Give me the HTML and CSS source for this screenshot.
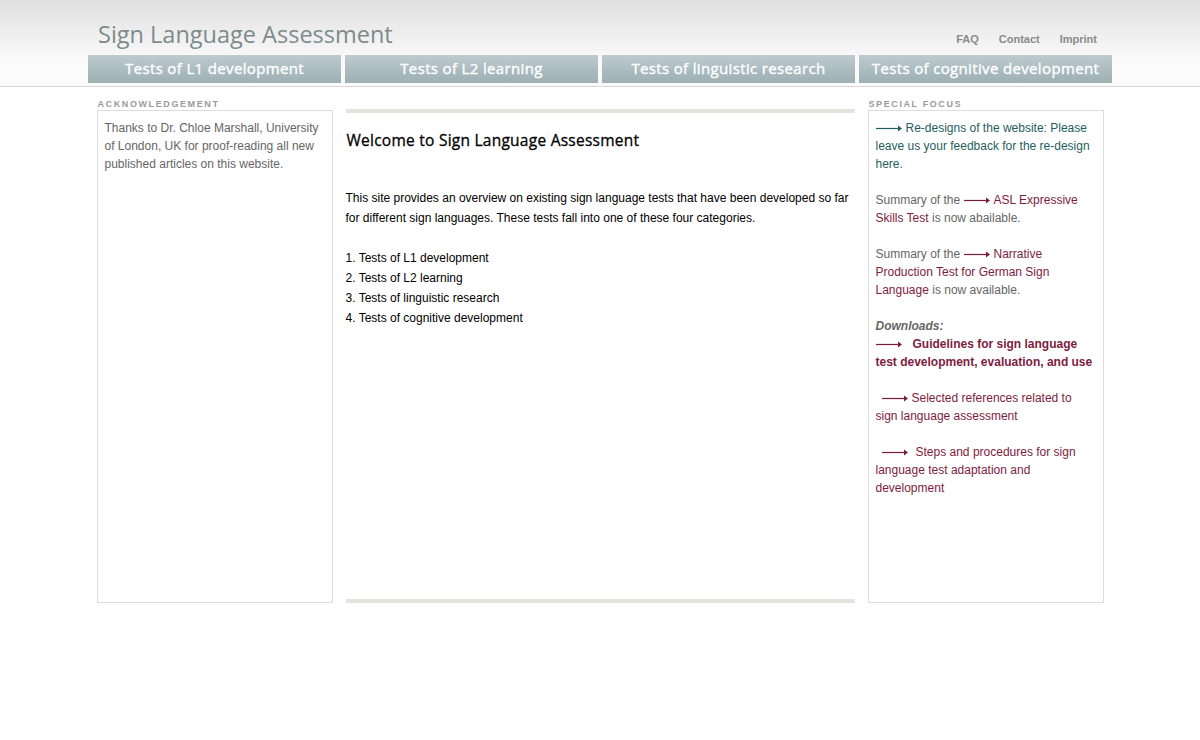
FILE: index.html
```html
<!DOCTYPE html>
<html lang="en">
<head>
<meta charset="utf-8">
<title>Sign Language Assessment</title>
<link rel="stylesheet" href="styles.css">
</head>
<body>
<header class="header">
  <div class="header-inner">
    <div class="top-row">
      <div class="site-title">Sign Language Assessment</div>
      <ul class="meta-links">
        <li><a href="#">FAQ</a></li>
        <li><a href="#">Contact</a></li>
        <li><a href="#">Imprint</a></li>
      </ul>
    </div>
    <nav class="tabs">
      <a class="tab" href="#">Tests of L1 development</a>
      <a class="tab" href="#">Tests of L2 learning</a>
      <a class="tab" href="#">Tests of linguistic research</a>
      <a class="tab" href="#">Tests of cognitive development</a>
    </nav>
  </div>
</header>

<main class="main">
  <aside class="side">
    <div class="side-label">Acknowledgement</div>
    <div class="side-box">
      <p class="gray">Thanks to Dr. Chloe Marshall, University of London, UK for proof-reading all new published articles on this website.</p>
    </div>
  </aside>

  <section class="center">
    <div class="bar"></div>
    <div class="center-body">
      <h1 class="welcome">Welcome to Sign Language Assessment</h1>
      <p class="intro">This site provides an overview on existing sign language tests that have been developed so far for different sign languages. These tests fall into one of these four categories.</p>
      <ol class="cats">
        <li>1. Tests of L1 development</li>
        <li>2. Tests of L2 learning</li>
        <li>3. Tests of linguistic research</li>
        <li>4. Tests of cognitive development</li>
      </ol>
    </div>
    <div class="bar"></div>
  </section>

  <aside class="side">
    <div class="side-label">Special Focus</div>
    <div class="side-box">
      <p class="teal"><svg class="arrow" width="26" height="8" viewBox="0 0 26 8"><line x1="0" y1="4.5" x2="22" y2="4.5" stroke="#1f5e5e" stroke-width="1.2"/><polygon points="22,1.5 26,4.5 22,7.5" fill="#1f5e5e"/></svg><span class="sp"></span>Re-designs of the website: Please leave us your feedback for the re-design here.</p>
      <p class="gray">Summary of the <a class="maroon" href="#"><svg class="arrow" width="26" height="8" viewBox="0 0 26 8"><line x1="0" y1="4.5" x2="22" y2="4.5" stroke="#7e1c40" stroke-width="1.2"/><polygon points="22,1.5 26,4.5 22,7.5" fill="#7e1c40"/></svg><span class="sp"></span>ASL Expressive</a> <a class="maroon" href="#">Skills Test</a> is now abailable.</p>
      <p class="gray">Summary of the <a class="maroon" href="#"><svg class="arrow" width="26" height="8" viewBox="0 0 26 8"><line x1="0" y1="4.5" x2="22" y2="4.5" stroke="#7e1c40" stroke-width="1.2"/><polygon points="22,1.5 26,4.5 22,7.5" fill="#7e1c40"/></svg><span class="sp"></span>Narrative</a> <a class="maroon" href="#">Production Test for German Sign</a> <a class="maroon" href="#">Language</a> is now available.</p>
      <p class="dl-head">Downloads:</p>
      <p class="maroon bold"><svg class="arrow" width="26" height="8" viewBox="0 0 26 8"><line x1="0" y1="4.5" x2="22" y2="4.5" stroke="#7e1c40" stroke-width="1.2"/><polygon points="22,1.5 26,4.5 22,7.5" fill="#7e1c40"/></svg><span class="gap8"></span>Guidelines for sign language test development, evaluation, and use</p>
      <p class="maroon"><span class="gap6"></span><svg class="arrow" width="26" height="8" viewBox="0 0 26 8"><line x1="0" y1="4.5" x2="22" y2="4.5" stroke="#7e1c40" stroke-width="1.2"/><polygon points="22,1.5 26,4.5 22,7.5" fill="#7e1c40"/></svg><span class="sp"></span>Selected references related to sign language assessment</p>
      <p class="maroon"><span class="gap6"></span><svg class="arrow" width="26" height="8" viewBox="0 0 26 8"><line x1="0" y1="4.5" x2="22" y2="4.5" stroke="#7e1c40" stroke-width="1.2"/><polygon points="22,1.5 26,4.5 22,7.5" fill="#7e1c40"/></svg><span class="gap4"></span>Steps and procedures for sign language test adaptation and development</p>
    </div>
  </aside>
</main>
</body>
</html>
```

FILE: styles.css
```css
* { box-sizing: border-box; }

html, body {
  margin: 0;
  padding: 0;
  background: #ffffff;
}

body {
  font-family: "Liberation Sans", Arial, sans-serif;
  font-size: 12px;
  color: #000;
}

a { text-decoration: none; }

.header {
  height: 87px;
  background: linear-gradient(to bottom, #e0e0e0 0px, #f1f1f1 40px, #fafafa 60px, #fbfbfb 86px);
  border-bottom: 1px solid #d6d6d6;
}

.header-inner {
  width: 1024px;
  margin: 0 auto;
}

.top-row {
  height: 55px;
  display: flex;
  justify-content: space-between;
  align-items: flex-start;
}

.site-title {
  font-family: "Open Sans", "DejaVu Sans", sans-serif;
  font-size: 23.5px;
  line-height: 30px;
  color: #7d8b8b;
  padding: 19px 0 0 10px;
  letter-spacing: 0;
}

.meta-links {
  list-style: none;
  margin: 0;
  padding: 32px 15px 0 0;
  display: flex;
  gap: 20px;
}

.meta-links a {
  font-family: "Liberation Sans", Arial, sans-serif;
  font-weight: bold;
  font-size: 11px;
  color: #8a8a8a;
}

.tabs {
  display: flex;
  gap: 4px;
}

.tab {
  flex: 1;
  height: 28px;
  line-height: 26px;
  text-align: center;
  color: #ffffff;
  font-family: "Open Sans", "DejaVu Sans", sans-serif;
  font-weight: 400;
  font-size: 15px;
  letter-spacing: 0.35px;
  -webkit-text-stroke: 0.35px #ffffff;
  background: linear-gradient(to bottom, #bdcbce 0%, #a9babe 60%, #9fb0b4 100%);
}

.main {
  width: 1007px;
  margin: 0 auto;
  padding-top: 10px;
  display: flex;
  gap: 13px;
  align-items: flex-start;
}

.side {
  width: 236px;
  flex: none;
}

.side-label {
  font-family: "Liberation Sans", Arial, sans-serif;
  font-weight: bold;
  font-size: 9px;
  line-height: 13px;
  letter-spacing: 1.6px;
  text-transform: uppercase;
  color: #9a9a9a;
  padding: 1px 0 0 1px;
  height: 13px;
}

.side-box {
  height: 493px;
  border: 1px solid #dcdcdc;
  padding: 8px 7px;
  font-size: 12px;
  line-height: 18px;
}

.side-box p {
  margin: 0 0 18px 0;
}

.gray { color: #666666; }
.teal { color: #1f5e5e; }
.maroon { color: #7e1c40; }
.bold { font-weight: bold; }

.dl-head {
  color: #666666;
  font-weight: bold;
  font-style: italic;
  margin-bottom: 0 !important;
}

.arrow {
  vertical-align: 0px;
}

.sp { display: inline-block; width: 4px; }
.gap8 { display: inline-block; width: 11px; }
.gap6 { display: inline-block; width: 6px; }
.gap4 { display: inline-block; width: 8px; }

.center {
  width: 509px;
  flex: none;
  margin-top: 12px;
  height: 494px;
  display: flex;
  flex-direction: column;
}

.bar {
  height: 4px;
  background: #e4e4da;
  flex: none;
}

.center-body {
  flex: 1;
}

.welcome {
  font-family: "Open Sans", "DejaVu Sans", sans-serif;
  font-weight: 400;
  font-size: 15.5px;
  line-height: 18px;
  margin: 18px 0 0 1px;
  color: #000;
  letter-spacing: 0.25px;
  -webkit-text-stroke: 0.3px #000;
}

.intro {
  margin: 39px 0 20px 0;
  line-height: 20px;
  font-size: 12px;
}

.cats {
  list-style: none;
  margin: 0;
  padding: 0;
  line-height: 20px;
}
```
